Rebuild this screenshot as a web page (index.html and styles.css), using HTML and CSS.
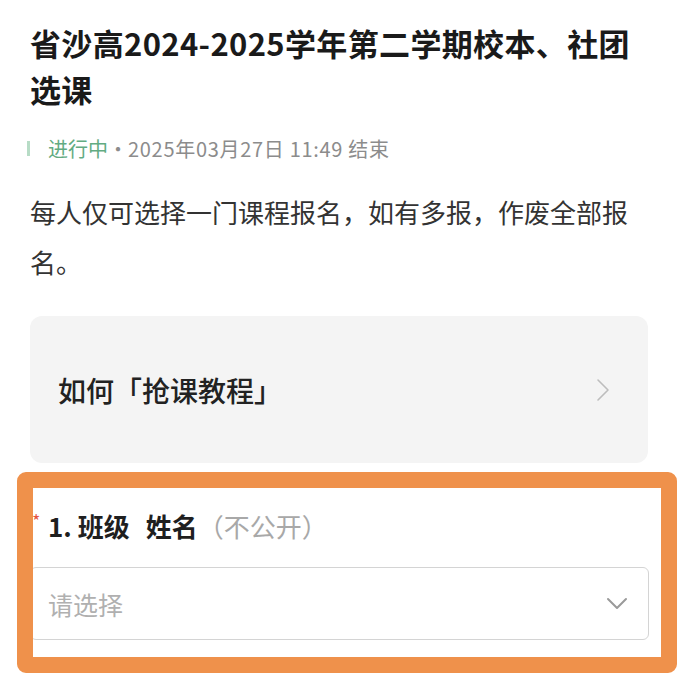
FILE: index.html
```html
<!DOCTYPE html>
<html lang="zh-CN">
<head>
<meta charset="utf-8">
<title>选课</title>
<link rel="stylesheet" href="styles.css">
</head>
<body>
<main class="page">
  <h1 class="title">省沙高2024-2025学年第二学期校本、社团选课</h1>
  <div class="meta">
    <span class="bar"></span>
    <span class="status">进行中</span>
    <span class="dot">·</span>
    <span class="time">2025年03月27日 11:49 结束</span>
  </div>
  <p class="desc">每人仅可选择一门课程报名，如有多报，作废全部报名。</p>
  <a class="card">
    <span class="card-text">如何「抢课教程」</span>
    <svg class="chev-right" width="14" height="24" viewBox="0 0 14 24"><path d="M2 2 L12 12 L2 22" fill="none" stroke="#bdbdbd" stroke-width="1.6" stroke-linecap="round" stroke-linejoin="round"/></svg>
  </a>
  <section class="question">
    <div class="label"><span class="req">*</span><span class="q-text">1. 班级</span><span class="q-text q-name">姓名</span><span class="private">（不公开）</span></div>
    <div class="select">
      <span class="placeholder">请选择</span>
      <svg class="chev-down" width="22" height="14" viewBox="0 0 22 14"><path d="M2 2 L11 11 L20 2" fill="none" stroke="#9a9a9a" stroke-width="2" stroke-linecap="round" stroke-linejoin="round"/></svg>
    </div>
  </section>
  <div class="highlight"></div>
</main>
</body>
</html>
```
FILE: styles.css
```css
* { box-sizing: border-box; }
html, body { margin: 0; padding: 0; background: #fff; }
body {
  font-family: "Noto Sans CJK SC", "Noto Sans", sans-serif;
  width: 689px;
  height: 685px;
  overflow: hidden;
}
.page {
  position: relative;
  padding: 20px 41px 0 30px;
}
.title {
  margin: 0;
  font-size: 31px;
  line-height: 46px;
  font-weight: 700;
  color: #1a1a1a;
  letter-spacing: 0.35px;
}
.meta {
  display: flex;
  align-items: center;
  margin-top: 22px;
  height: 28px;
  font-size: 20px;
  color: #8c8c8c;
}
.bar {
  width: 3px;
  height: 15px;
  background: #b7dcc6;
  margin-left: -3px;
  margin-right: 18px;
}
.status { color: #62ab82; }
.dot {
  display: inline-block;
  width: 20px;
  text-align: center;
}
.time { letter-spacing: 0.7px; }
.desc {
  margin: 25px 0 0;
  font-size: 26px;
  line-height: 50px;
  color: #333;
}
.card {
  margin-top: 29px;
  height: 147px;
  background: #f4f4f4;
  border-radius: 12px;
  display: flex;
  align-items: center;
  justify-content: space-between;
  padding: 0 38px 0 28px;
}
.card-text {
  font-size: 28px;
  font-weight: 500;
  color: #222;
}
.question {
  margin-top: 48px;
}
.label {
  display: flex;
  align-items: center;
  height: 30px;
  font-size: 26px;
  line-height: 30px;
}
.req {
  width: 18px;
  color: #e5553f;
  font-size: 18px;
  align-self: flex-start;
  line-height: 18px;
  padding-left: 2px;
}
.q-text { font-weight: 700; color: #1f1f1f; }
.q-name { margin-left: 16px; }
.private { color: #a8a8a8; }
.select {
  margin-top: 26px;
  width: 619px;
  height: 73px;
  border: 1.5px solid #d4d4d4;
  border-radius: 6px;
  display: flex;
  align-items: center;
  justify-content: space-between;
  padding: 0 20px 0 17px;
}
.placeholder { font-size: 25px; color: #b0b0b0; }
.highlight {
  position: absolute;
  left: 17px;
  top: 472px;
  width: 660px;
  height: 201px;
  border: 16px solid #ef914b;
  border-radius: 9px;
}
```
